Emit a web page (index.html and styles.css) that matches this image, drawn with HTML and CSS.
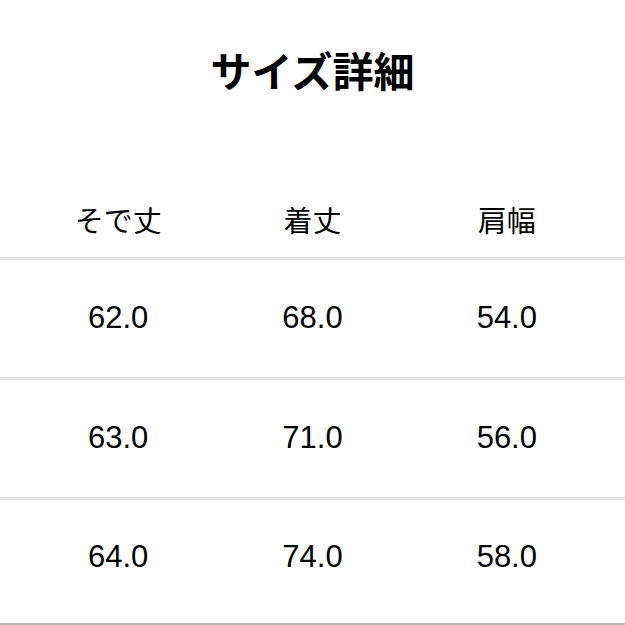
FILE: index.html
```html
<!DOCTYPE html>
<html lang="ja">
<head>
<meta charset="utf-8">
<title>サイズ詳細</title>
<link rel="stylesheet" href="styles.css">
</head>
<body>
<main class="page">
  <h1 class="title">サイズ詳細</h1>
  <div class="table">
    <div class="row head">
      <div class="cell">そで丈</div>
      <div class="cell">着丈</div>
      <div class="cell">肩幅</div>
    </div>
    <div class="row">
      <div class="cell">62.0</div>
      <div class="cell">68.0</div>
      <div class="cell">54.0</div>
    </div>
    <div class="row">
      <div class="cell">63.0</div>
      <div class="cell">71.0</div>
      <div class="cell">56.0</div>
    </div>
    <div class="row last">
      <div class="cell">64.0</div>
      <div class="cell">74.0</div>
      <div class="cell">58.0</div>
    </div>
  </div>
</main>
</body>
</html>
```
FILE: styles.css
```css
html, body {
  margin: 0;
  padding: 0;
  background: #ffffff;
}
body {
  font-family: "Liberation Sans", "Noto Sans CJK JP", sans-serif;
  color: #000000;
  width: 625px;
  height: 625px;
  overflow: hidden;
}
.page {
  display: flex;
  flex-direction: column;
}
.title {
  margin: 0;
  height: 144px;
  box-sizing: border-box;
  padding-bottom: 6px;
  line-height: 138px;
  font-size: 41px;
  font-weight: bold;
  text-align: center;
  font-family: "Noto Sans CJK JP", sans-serif;
}
.table {
  display: flex;
  flex-direction: column;
}
.row {
  display: grid;
  grid-template-columns: repeat(3, 1fr);
  padding: 0 21px;
  height: 117px;
  line-height: 116px;
  font-size: 31px;
  text-align: center;
  border-bottom: 3px solid #e6e6e6;
}
.row.head {
  height: 113px;
  box-sizing: border-box;
  padding-top: 61px;
  line-height: 29px;
  font-size: 29px;
  font-family: "Noto Sans CJK JP", sans-serif;
  border-bottom: none;
}
.row.head + .row {
  border-top: 3px solid #e6e6e6;
}
.row.last {
  height: 123px;
  line-height: 114px;
  border-bottom: 2px solid #b3b3b3;
}
```
